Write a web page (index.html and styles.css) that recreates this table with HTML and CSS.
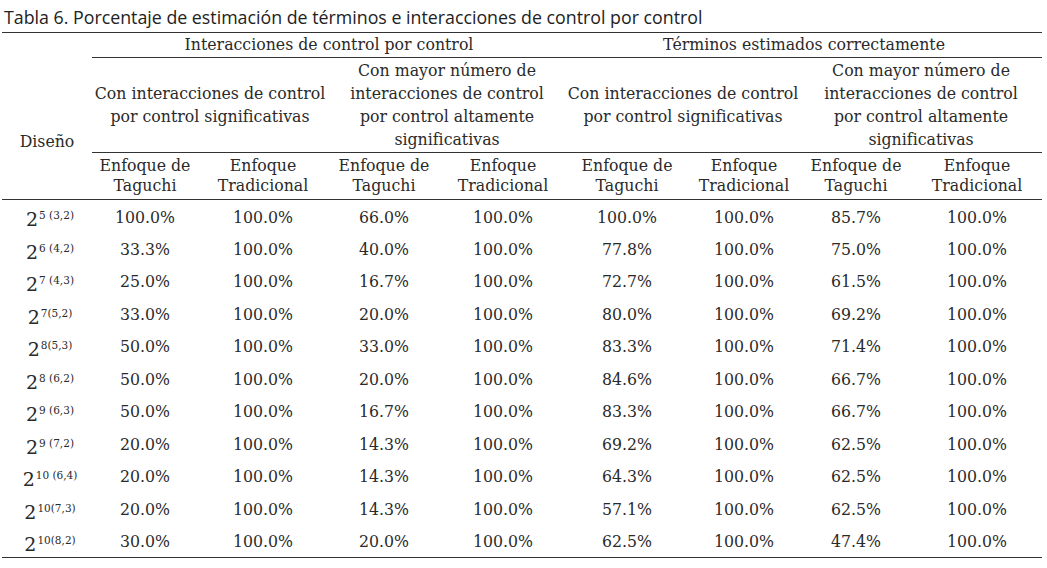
FILE: index.html
```html
<!DOCTYPE html>
<html lang="es">
<head>
<meta charset="utf-8">
<title>Tabla 6</title>
<link rel="stylesheet" href="styles.css">
</head>
<body>
<h1 class="title">Tabla 6. Porcentaje de estimación de términos e interacciones de control por control</h1>
<table class="tbl">
  <colgroup>
    <col class="c-dis"><col class="c1"><col class="c2"><col class="c3"><col class="c4"><col class="c5"><col class="c6"><col class="c7"><col class="c8">
  </colgroup>
  <thead>
    <tr class="r-group">
      <th rowspan="2" class="diseno">Diseño</th>
      <th colspan="4" class="group">Interacciones de control por control</th>
      <th colspan="4" class="group">Términos estimados correctamente</th>
    </tr>
    <tr class="r-sub">
      <th colspan="2" class="sub">Con interacciones de control<br>por control significativas</th>
      <th colspan="2" class="sub">Con mayor número de<br>interacciones de control<br>por control altamente<br>significativas</th>
      <th colspan="2" class="sub">Con interacciones de control<br>por control significativas</th>
      <th colspan="2" class="sub">Con mayor número de<br>interacciones de control<br>por control altamente<br>significativas</th>
    </tr>
    <tr class="r-enf">
      <th class="enf"></th>
      <th class="enf">Enfoque de<br>Taguchi</th>
      <th class="enf">Enfoque<br>Tradicional</th>
      <th class="enf">Enfoque de<br>Taguchi</th>
      <th class="enf">Enfoque<br>Tradicional</th>
      <th class="enf">Enfoque de<br>Taguchi</th>
      <th class="enf">Enfoque<br>Tradicional</th>
      <th class="enf">Enfoque de<br>Taguchi</th>
      <th class="enf">Enfoque<br>Tradicional</th>
    </tr>
  </thead>
  <tbody>
    <tr><td class="lbl">2<sup>5 (3,2)</sup></td><td>100.0%</td><td>100.0%</td><td>66.0%</td><td>100.0%</td><td>100.0%</td><td>100.0%</td><td>85.7%</td><td>100.0%</td></tr>
    <tr><td class="lbl">2<sup>6 (4,2)</sup></td><td>33.3%</td><td>100.0%</td><td>40.0%</td><td>100.0%</td><td>77.8%</td><td>100.0%</td><td>75.0%</td><td>100.0%</td></tr>
    <tr><td class="lbl">2<sup>7 (4,3)</sup></td><td>25.0%</td><td>100.0%</td><td>16.7%</td><td>100.0%</td><td>72.7%</td><td>100.0%</td><td>61.5%</td><td>100.0%</td></tr>
    <tr><td class="lbl">2<sup>7(5,2)</sup></td><td>33.0%</td><td>100.0%</td><td>20.0%</td><td>100.0%</td><td>80.0%</td><td>100.0%</td><td>69.2%</td><td>100.0%</td></tr>
    <tr><td class="lbl">2<sup>8(5,3)</sup></td><td>50.0%</td><td>100.0%</td><td>33.0%</td><td>100.0%</td><td>83.3%</td><td>100.0%</td><td>71.4%</td><td>100.0%</td></tr>
    <tr><td class="lbl">2<sup>8 (6,2)</sup></td><td>50.0%</td><td>100.0%</td><td>20.0%</td><td>100.0%</td><td>84.6%</td><td>100.0%</td><td>66.7%</td><td>100.0%</td></tr>
    <tr><td class="lbl">2<sup>9 (6,3)</sup></td><td>50.0%</td><td>100.0%</td><td>16.7%</td><td>100.0%</td><td>83.3%</td><td>100.0%</td><td>66.7%</td><td>100.0%</td></tr>
    <tr><td class="lbl">2<sup>9 (7,2)</sup></td><td>20.0%</td><td>100.0%</td><td>14.3%</td><td>100.0%</td><td>69.2%</td><td>100.0%</td><td>62.5%</td><td>100.0%</td></tr>
    <tr><td class="lbl">2<sup>10 (6,4)</sup></td><td>20.0%</td><td>100.0%</td><td>14.3%</td><td>100.0%</td><td>64.3%</td><td>100.0%</td><td>62.5%</td><td>100.0%</td></tr>
    <tr><td class="lbl">2<sup>10(7,3)</sup></td><td>20.0%</td><td>100.0%</td><td>14.3%</td><td>100.0%</td><td>57.1%</td><td>100.0%</td><td>62.5%</td><td>100.0%</td></tr>
    <tr class="last"><td class="lbl">2<sup>10(8,2)</sup></td><td>30.0%</td><td>100.0%</td><td>20.0%</td><td>100.0%</td><td>62.5%</td><td>100.0%</td><td>47.4%</td><td>100.0%</td></tr>
  </tbody>
</table>
</body>
</html>
```

FILE: styles.css
```css
html, body {
  margin: 0;
  padding: 0;
  background: #ffffff;
}

body {
  padding-left: 2px;
  color: #2a2a2a;
  font-family: "DejaVu Serif", serif;
}

.title {
  margin: 0;
  padding-left: 2px;
  height: 32px;
  line-height: 34px;
  font-family: "Open Sans", sans-serif;
  font-weight: 400;
  font-size: 17.8px;
  color: #222222;
  white-space: nowrap;
}

.tbl {
  width: 1040px;
  border-collapse: collapse;
  table-layout: fixed;
  border-top: 1px solid #333333;
  font-size: 15.75px;
}

.c-dis { width: 90px; }
.c1 { width: 106px; }
.c2 { width: 130px; }
.c3 { width: 112px; }
.c4 { width: 126px; }
.c5 { width: 122px; }
.c6 { width: 112px; }
.c7 { width: 112px; }
.c8 { width: 130px; }

th, td {
  padding: 0;
  font-weight: normal;
  text-align: center;
  white-space: nowrap;
}

.group {
  height: 24px;
  line-height: 22px;
  border-bottom: 1px solid #333333;
}

.diseno {
  vertical-align: bottom;
  line-height: 23px;
  padding-bottom: 0;
}

.sub {
  height: 94px;
  line-height: 23px;
  border-bottom: 1px solid #333333;
}

.enf {
  height: 46px;
  line-height: 20.5px;
  border-bottom: 1px solid #333333;
}

td {
  height: 32.5px;
  line-height: 20px;
  padding-top: 3px;
  box-sizing: border-box;
}

.last td {
  border-bottom: 1px solid #333333;
}

.lbl {
  font-size: 19px;
  padding-left: 6px;
}

.lbl sup {
  font-size: 10.5px;
  vertical-align: 0.7em;
  margin-left: 1px;
}
```
